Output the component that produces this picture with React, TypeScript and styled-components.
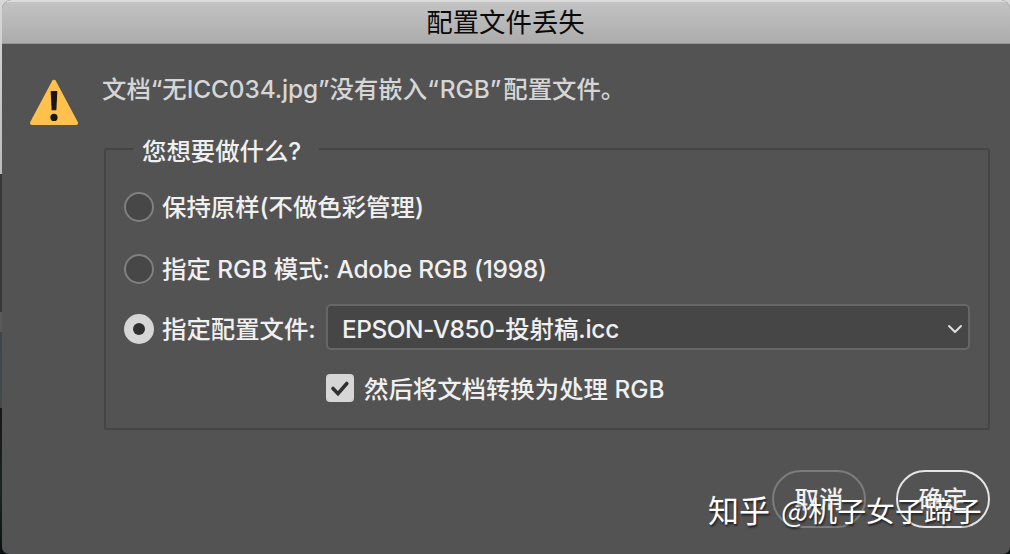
import React, { useState } from "react";
import styled, { createGlobalStyle } from "styled-components";

const GlobalStyle = createGlobalStyle`
  * {
    box-sizing: border-box;
  }
  body {
    margin: 0;
    overflow: hidden;
  }
`;

const Desktop = styled.div`
  display: flex;
  position: relative;
  width: 1010px;
  height: 554px;
  padding-left: 2px;
  background: linear-gradient(
    180deg,
    #d8d8d8 0px,
    #bcbcbc 174px,
    #373737 174px,
    #373737 312px,
    #5a5a58 312px,
    #5a5a58 332px,
    #3c4650 332px,
    #444a4a 408px,
    #151616 408px,
    #1d2424 490px,
    #0a1010 554px
  );
  font-family: Inter, "Noto Sans CJK SC", sans-serif;
`;

const Dialog = styled.div`
  display: flex;
  flex-direction: column;
  flex: 1;
  overflow: hidden;
  border-radius: 9px 9px 7px 7px;
  background: #535353;
  color: #f0f0f0;
`;

const TitleBar = styled.div`
  display: flex;
  align-items: center;
  justify-content: center;
  flex: none;
  height: 44px;
  padding-right: 1px;
  background: linear-gradient(180deg, #c3c3c3, #acacac);
  border-top: 2px solid #dcdcdc;
  border-bottom: 1px solid #959595;
  color: #0a0a0a;
  font-size: 26.4px;
  line-height: 39px;
`;

const Body = styled.div`
  display: flex;
  flex: 1;
  padding: 29px 20px 0 28px;
`;

const IconColumn = styled.div`
  flex: none;
  width: 74px;
  padding-top: 6px;
`;

const Content = styled.div`
  display: flex;
  flex-direction: column;
  flex: 1;
  min-width: 0;
`;

const Text = styled.span`
  font-size: 24.4px;
  font-weight: 500;
  line-height: 32px;
  white-space: pre;
`;

const Tracked = styled.span<{ $spacing: number }>`
  letter-spacing: ${(p) => p.$spacing}px;
`;

const Message = styled.div`
  height: 60px;
  margin-left: -2px;
  color: #d6d6d6;
`;

const Group = styled.fieldset`
  display: flex;
  flex-direction: column;
  height: 297px;
  min-width: 0;
  margin: 0;
  padding: 4px 18px 0;
  border: 2px solid #454545;
  border-radius: 3px;
`;

const Legend = styled.legend`
  display: flex;
  height: 32px;
  margin-left: 9px;
  padding: 2px 18px 0 9px;
`;

const Row = styled.label<{ $height: number; $indent?: number }>`
  display: flex;
  align-items: center;
  flex: none;
  height: ${(p) => p.$height}px;
  padding-left: ${(p) => p.$indent || 0}px;
`;

const Radio = styled.span<{ $checked: boolean }>`
  flex: none;
  display: grid;
  place-items: center;
  width: 30px;
  height: 30px;
  margin-right: 8px;
  border: 2px solid ${(p) => (p.$checked ? "#d6d6d6" : "#808080")};
  border-radius: 50%;
  background: ${(p) => (p.$checked ? "#d6d6d6" : "#474747")};

  &::after {
    content: "";
    width: 12px;
    height: 12px;
    border-radius: 50%;
    background: ${(p) => (p.$checked ? "#303030" : "transparent")};
  }
`;

const Select = styled.span`
  display: flex;
  align-items: center;
  justify-content: space-between;
  flex: none;
  width: 644px;
  height: 46px;
  margin: 0 0 4px auto;
  padding: 3px 5px 0 14px;
  background: #464646;
  border: 2px solid #666;
  border-radius: 5px;
`;

const Checkbox = styled.span`
  display: flex;
  flex: none;
  width: 28px;
  height: 28px;
  margin-right: 10px;
  border-radius: 4px;
  background: #d6d6d6;
`;

const CheckLabel = styled(Text)`
  padding-top: 2px;
`;

const Actions = styled.div`
  display: flex;
  justify-content: flex-end;
  gap: 30px;
  margin-top: 40px;
`;

const Button = styled.button<{ $primary?: boolean }>`
  display: flex;
  align-items: center;
  justify-content: center;
  width: 94px;
  height: 58px;
  padding: 0;
  border: 2px solid ${(p) => (p.$primary ? "#e4e4e4" : "#7c7c7c")};
  border-radius: 29px;
  background: transparent;
  color: #f0f0f0;
  font-family: inherit;
`;

const Watermark = styled.div`
  display: flex;
  align-items: baseline;
  gap: 11px;
  position: absolute;
  left: 708px;
  top: 486px;
  color: #fff;
  font-family: "Noto Sans CJK SC", sans-serif;
  font-size: 31px;
  line-height: 46px;
  white-space: pre;
  text-shadow: 1px 2px 2px rgba(0, 0, 0, 0.6);
`;

const Author = styled.span`
  font-size: 28.9px;
`;

const WarningIcon = () => (
  <svg width="48" height="46" viewBox="0 0 48 46" style={{ display: "block" }}>
    <path
      d="M24 2.8 L46 44 H2 Z"
      fill="#ffc14d"
      stroke="#ffc14d"
      strokeWidth="4"
      strokeLinejoin="round"
    />
    <path
      d="M21.4 12.6h5.2l-.9 18h-3.4z"
      fill="#1a1712"
      stroke="#1a1712"
      strokeWidth="1.4"
      strokeLinejoin="round"
    />
    <circle cx="24" cy="38.4" r="3.6" fill="#1a1712" />
  </svg>
);

const ChevronIcon = () => (
  <svg width="16" height="10" viewBox="0 0 16 10">
    <path
      d="M2 2l6 6 6-6"
      fill="none"
      stroke="#e0e0e0"
      strokeWidth="2"
      strokeLinecap="round"
      strokeLinejoin="round"
    />
  </svg>
);

const CheckIcon = () => (
  <svg width="28" height="28" viewBox="0 0 28 28">
    <path
      d="M7 14.5l5 5.2L20.8 9.5"
      fill="none"
      stroke="#303030"
      strokeWidth="3.6"
      strokeLinecap="round"
    />
  </svg>
);

const App: React.FC = () => {
  const [choice, setChoice] = useState("profile");

  return (
    <Desktop>
      <GlobalStyle />
      <Dialog>
        <TitleBar>配置文件丢失</TitleBar>
        <Body>
          <IconColumn>
            <WarningIcon />
          </IconColumn>
          <Content>
            <Message>
              <Text>
                文档“无<Tracked $spacing={-0.1}>ICC034.jpg</Tracked>”没有嵌入
                <Tracked $spacing={1}>“</Tracked>RGB
                <Tracked $spacing={2}>”</Tracked>配置文件。
              </Text>
            </Message>
            <Group>
              <Legend>
                <Text>您想要做什么?</Text>
              </Legend>
              <Row $height={76} onClick={() => setChoice("keep")}>
                <Radio $checked={choice === "keep"} />
                <Text>保持原样(不做色彩管理)</Text>
              </Row>
              <Row $height={48} onClick={() => setChoice("working")}>
                <Radio $checked={choice === "working"} />
                <Text>
                  指定 RGB 模式: <Tracked $spacing={-0.2}>Adobe RGB (1998)</Tracked>
                </Text>
              </Row>
              <Row $height={72} onClick={() => setChoice("profile")}>
                <Radio $checked={choice === "profile"} />
                <Text>指定配置文件:</Text>
                <Select>
                  <Text>
                    <Tracked $spacing={-0.45}>EPSON-V850-</Tracked>投射稿
                    <Tracked $spacing={-0.25}>.icc</Tracked>
                  </Text>
                  <ChevronIcon />
                </Select>
              </Row>
              <Row $height={46} $indent={202}>
                <Checkbox>
                  <CheckIcon />
                </Checkbox>
                <CheckLabel>然后将文档转换为处理 RGB</CheckLabel>
              </Row>
            </Group>
            <Actions>
              <Button>
                <Text>取消</Text>
              </Button>
              <Button $primary>
                <Text>确定</Text>
              </Button>
            </Actions>
          </Content>
        </Body>
      </Dialog>
      <Watermark>
        <span>知乎</span>
        <Author>@机子女子蹄子</Author>
      </Watermark>
    </Desktop>
  );
};

export default App;
